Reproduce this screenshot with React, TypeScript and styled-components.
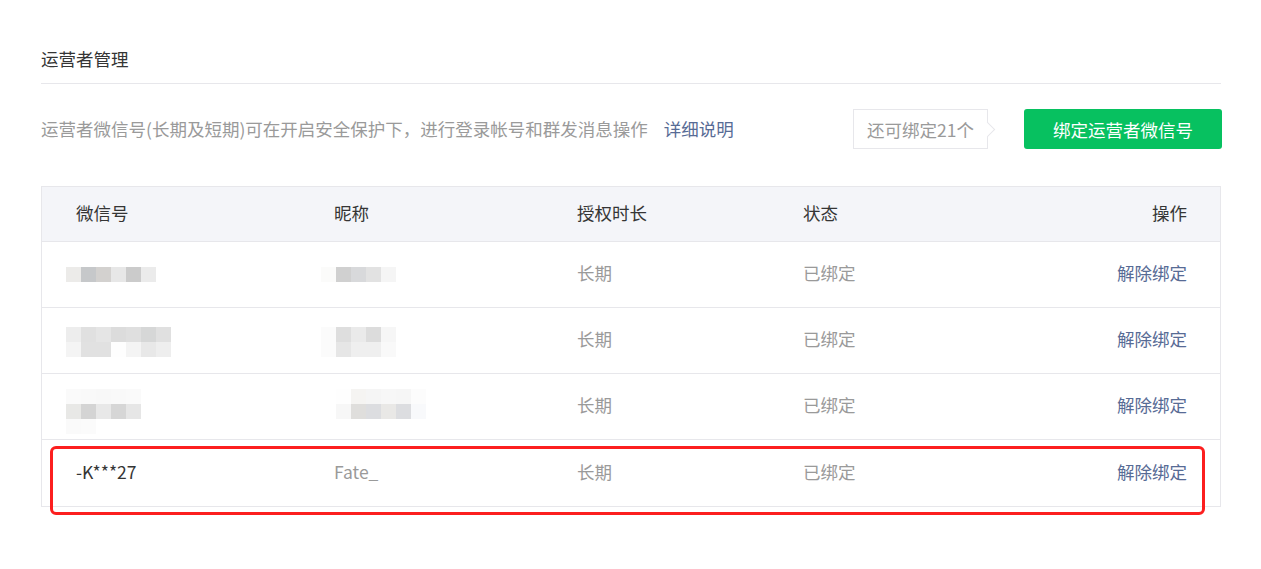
import React from "react";
import styled, { createGlobalStyle } from "styled-components";

const GlobalStyle = createGlobalStyle`
  html, body { margin: 0; padding: 0; background: #ffffff; }
  body {
    font-family: "Noto Sans CJK SC", "Noto Sans", sans-serif;
    font-size: 17.5px;
    color: #353535;
  }
  * { box-sizing: border-box; }
`;

const Page = styled.div`
  width: 1261px;
  height: 569px;
  padding: 47px 40px 0 41px;
`;

const Title = styled.h2`
  margin: 0;
  font-size: 17.5px;
  font-weight: 400;
  line-height: 24px;
  padding-bottom: 12px;
  border-bottom: 1px solid #e7e7eb;
  color: #353535;
`;

const InfoBar = styled.div`
  margin-top: 25px;
  height: 40px;
  display: flex;
  align-items: center;
`;

const Desc = styled.span`
  color: #9a9a9a;
  line-height: 24px;
  padding-bottom: 1px;
`;

const Link = styled.a`
  color: #576b95;
  text-decoration: none;
  margin-left: 16px;
  line-height: 24px;
  padding-bottom: 1px;
  cursor: pointer;
`;

const Spacer = styled.div`
  flex: 1;
`;

const Quota = styled.div`
  position: relative;
  height: 40px;
  width: 135px;
  border: 1px solid #e7e7eb;
  background: #fff;
  color: #9a9a9a;
  display: flex;
  align-items: center;
  justify-content: center;
  margin-right: 36px;
  &::after {
    content: "";
    position: absolute;
    right: -6px;
    top: 50%;
    width: 10px;
    height: 10px;
    margin-top: -5px;
    background: #fff;
    border-top: 1px solid #e7e7eb;
    border-right: 1px solid #e7e7eb;
    transform: rotate(45deg);
  }
`;

const PrimaryButton = styled.button`
  height: 40px;
  width: 198px;
  margin-right: -1px;
  border: none;
  border-radius: 3px;
  background: #07c160;
  color: #fff;
  font-family: inherit;
  font-size: 17.5px;
  cursor: pointer;
`;

const TableWrap = styled.div`
  position: relative;
  margin-top: 37px;
`;

const Table = styled.div`
  border: 1px solid #e7e7eb;
`;

const cols = "258px 243px 226px 226px 1fr";

const HeadRow = styled.div`
  display: grid;
  grid-template-columns: ${cols};
  height: 55px;
  background: #f4f5f9;
  border-bottom: 1px solid #e7e7eb;
  align-items: center;
`;

const Row = styled.div<{ $last?: boolean }>`
  display: grid;
  grid-template-columns: ${cols};
  height: 66px;
  border-bottom: ${(p) => (p.$last ? "none" : "1px solid #e7e7eb")};
  align-items: center;
`;

const Cell = styled.div<{ $tone?: "dark" | "muted" | "link"; $right?: boolean }>`
  padding: 0 33px 3px 34px;
  line-height: 24px;
  display: flex;
  align-items: center;
  justify-content: ${(p) => (p.$right ? "flex-end" : "flex-start")};
  color: ${(p) =>
    p.$tone === "muted" ? "#9a9a9a" : p.$tone === "link" ? "#576b95" : "#353535"};
  white-space: nowrap;
`;

const MosaicSvg = styled.svg<{ $dx: number; $dy: number }>`
  display: block;
  margin-left: ${(p) => p.$dx}px;
  margin-top: ${(p) => p.$dy}px;
`;

const Highlight = styled.div`
  position: absolute;
  left: 9px;
  top: 260px;
  width: 1155px;
  height: 69px;
  border: 3px solid #fc1f1f;
  border-radius: 6px;
  pointer-events: none;
`;

type MosaicProps = { rows: string[][]; dx: number; dy?: number };

const Mosaic = ({ rows, dx, dy = 0 }: MosaicProps) => {
  const w = Math.max(...rows.map((r) => r.length)) * 15;
  const h = rows.length * 15;
  return (
    <MosaicSvg $dx={dx} $dy={dy} width={w} height={h} viewBox={`0 0 ${w} ${h}`}>
      {rows.map((r, y) =>
        r.map((c, x) =>
          c ? <rect key={`${x}-${y}`} x={x * 15} y={y * 15} width={15} height={15} fill={c} /> : null
        )
      )}
    </MosaicSvg>
  );
};

const blurred = [
  {
    id: [["#ecebe9", "#c6c8ca", "#d3d1cf", "#e7e7e7", "#cbcbcb", "#ebebeb"]],
    idDx: -10,
    idDy: 2,
    nick: [["#fbfbfa", "#d0d0d0", "#d8d9db", "#e2e2e2", "#f5f5f5"]],
    nickDx: -13,
    nickDy: 2,
  },
  {
    id: [
      ["#ededed", "#e0e0e0", "#e5e5e5", "#dcdcdc", "#dfdfdf", "#d6d7d7", "#e0e0e0"],
      ["#f4f4f4", "#e1e1e1", "#e1e1e1", "#fefefe", "#f4f4f4", "#e8e8e8", "#eeeeee"],
    ],
    idDx: -10,
    idDy: 5,
    nick: [
      ["#fbfbfb", "#dedede", "#eaeaea", "#dcdcdc", "#f6f6f6"],
      ["#fbfbfb", "#e6e6e6", "#efefef", "#efefef", "#f9f9f9"],
    ],
    nickDx: -13,
    nickDy: 5,
  },
  {
    id: [
      ["#fafafa", "#f9f9f9", "#f8f8f8", "#f9f9f9", "#fafafa"],
      ["#e8e8e6", "#d4d4d4", "#e8e8e8", "#d6d6d6", "#e6e6e6"],
      ["#fafafa", "#fbfbfb", "", "", ""],
    ],
    idDx: -10,
    idDy: 13,
    nick: [
      ["#fefefe", "#f5f4f2", "#f5f5f5", "#f7f7f7", "#f6f6f6", "#fcfcfc"],
      ["#f7f7f7", "#dfdedc", "#dcdde0", "#e9e8e6", "#dcdde0", "#f8f9fb"],
    ],
    nickDx: 2,
    nickDy: -2,
  },
];

export default function App() {
  return (
    <>
      <GlobalStyle />
      <Page>
        <Title>运营者管理</Title>
        <InfoBar>
          <Desc>运营者微信号(长期及短期)可在开启安全保护下，进行登录帐号和群发消息操作</Desc>
          <Link>详细说明</Link>
          <Spacer />
          <Quota>还可绑定21个</Quota>
          <PrimaryButton>绑定运营者微信号</PrimaryButton>
        </InfoBar>
        <TableWrap>
          <Table>
            <HeadRow>
              <Cell>微信号</Cell>
              <Cell>昵称</Cell>
              <Cell>授权时长</Cell>
              <Cell>状态</Cell>
              <Cell $right>操作</Cell>
            </HeadRow>
            {blurred.map((b, i) => (
              <Row key={i}>
                <Cell>
                  <Mosaic rows={b.id} dx={b.idDx} dy={b.idDy} />
                </Cell>
                <Cell>
                  <Mosaic rows={b.nick} dx={b.nickDx} dy={b.nickDy} />
                </Cell>
                <Cell $tone="muted">长期</Cell>
                <Cell $tone="muted">已绑定</Cell>
                <Cell $tone="link" $right>解除绑定</Cell>
              </Row>
            ))}
            <Row $last>
              <Cell $tone="dark">-K***27</Cell>
              <Cell $tone="muted">Fate_</Cell>
              <Cell $tone="muted">长期</Cell>
              <Cell $tone="muted">已绑定</Cell>
              <Cell $tone="link" $right>解除绑定</Cell>
            </Row>
          </Table>
          <Highlight />
        </TableWrap>
      </Page>
    </>
  );
}
